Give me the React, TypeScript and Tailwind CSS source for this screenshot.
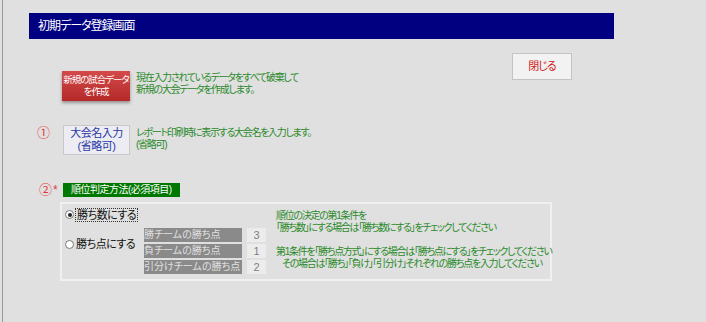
import React from "react";

const jp = "font-['Liberation_Sans','Noto_Sans_CJK_JP',sans-serif] [font-feature-settings:'palt']";
const note = "text-[10px] leading-[12px] tracking-[-1.3px] text-[#2a8a2a] whitespace-nowrap";

function Radio({ checked }: { checked?: boolean }) {
  return (
    <span className="w-[9px] h-[9px] rounded-full border border-[#7a7a7a] bg-white flex items-center justify-center shrink-0">
      {checked && <span className="w-[4px] h-[4px] rounded-full bg-[#222]" />}
    </span>
  );
}

const points = [
  { label: "勝チームの勝ち点", value: "3" },
  { label: "負チームの勝ち点", value: "1" },
  { label: "引分けチームの勝ち点", value: "2" },
];

export default function App() {
  return (
    <div className={`w-full h-[322px] bg-[#e0e0e0] pl-[2px] ${jp}`}>
      <div className="h-full border-l border-l-[#9a9a9a]">
        <div className="w-[585px] ml-[26px] pt-[13px]">
          {/* ヘッダー */}
          <div className="h-[26px] bg-[#000080] flex items-center pl-[9px] text-white text-[12px] tracking-[-1px]">
            初期データ登録画面
          </div>

          {/* 新規作成 + 閉じる */}
          <div className="flex items-start justify-between">
            <div className="flex items-start ml-[33px] mt-[32px]">
              <button className="w-[68px] h-[30px] bg-gradient-to-b from-[#d44a4a] to-[#b42828] text-white text-[9.5px] leading-[12px] tracking-[-1px] whitespace-nowrap shadow-[0_2px_3px_rgba(0,0,0,0.35)] flex flex-col items-center justify-center">
                <span>新規の試合データ</span>
                <span>を作成</span>
              </button>
              <div className={`ml-[6px] mt-[1px] ${note}`}>
                <div>現在入力されているデータをすべて破棄して</div>
                <div>新規の大会データを作成します。</div>
              </div>
            </div>
            <button className="mt-[14px] mr-[42px] w-[60px] h-[27px] bg-[#f2f2f2] border border-[#c4c4c4] text-[#d02020] text-[11px] tracking-[-1px] flex items-center justify-center">
              閉じる
            </button>
          </div>

          {/* ① 大会名入力 */}
          <div className="flex items-start mt-[24px]">
            <span className="w-[34px] pl-[8px] pt-[1px] text-[#e03a3a] text-[13px] leading-[14px]">①</span>
            <button className="w-[67px] h-[30px] bg-[#ececf2] border border-[#c8c8c8] text-[#2838a8] text-[11px] leading-[13px] tracking-[-0.5px] whitespace-nowrap flex flex-col items-center justify-center">
              <span>大会名入力</span>
              <span>(省略可)</span>
            </button>
            <div className={`ml-[6px] mt-[2px] ${note}`}>
              <div>レポート印刷時に表示する大会名を入力します。</div>
              <div>(省略可)</div>
            </div>
          </div>

          {/* ② 順位判定方法 */}
          <div className="flex items-center mt-[28px]">
            <span className="w-[34px] pl-[10px] text-[#e03a3a] text-[13px] leading-[14px] flex items-center">
              ②<span className="text-[12px] ml-[1px]">*</span>
            </span>
            <div className="h-[14px] w-[117px] bg-[#007800] text-white text-[10px] leading-[14px] tracking-[-0.5px] pl-[8px] whitespace-nowrap">
              順位判定方法(必須項目)
            </div>
          </div>

          <div className="ml-[31px] mt-[5px] w-[492px] h-[79px] border-2 border-[#f0f0f0] flex pt-[3px] pl-[3px]">
            <div className="flex flex-col">
              <div className="flex items-center h-[15px]">
                <Radio checked />
                <span className="ml-[1px] px-[1px] border border-dotted border-[#333] text-[11px] leading-[12px] tracking-[-0.5px] text-[#111] whitespace-nowrap">
                  勝ち数にする
                </span>
              </div>
              <div className="flex items-start mt-[6px]">
                <div className="w-[79px] flex items-center mt-[9px]">
                  <Radio />
                  <span className="ml-[2px] text-[11px] leading-[14px] tracking-[-0.5px] text-[#111] whitespace-nowrap">勝ち点にする</span>
                </div>
                <div className="grid grid-cols-[98px_19px] gap-x-[5px] gap-y-[2px]">
                  {points.map((p) => (
                    <React.Fragment key={p.label}>
                      <div className="h-[14px] bg-[#8a8a8a] text-[#e0e0e0] text-[10px] leading-[14px] whitespace-nowrap">
                        {p.label}
                      </div>
                      <div className="h-[14px] bg-[#ececec] text-[#808080] text-[11px] leading-[14px] text-center">
                        {p.value}
                      </div>
                    </React.Fragment>
                  ))}
                </div>
              </div>
            </div>
            <div className={`ml-[10px] pt-[3px] ${note}`}>
              <div>順位の決定の第1条件を</div>
              <div>「勝ち数」にする場合は「勝ち数にする」をチェックしてください</div>
              <div className="h-[12px]" />
              <div>第1条件を「勝ち点方式」にする場合は「勝ち点にする」をチェックしてください</div>
              <div className="pl-[6px]">その場合は「勝ち」「負け」「引分け」それぞれの勝ち点を入力してください</div>
            </div>
          </div>
        </div>
      </div>
    </div>
  );
}
